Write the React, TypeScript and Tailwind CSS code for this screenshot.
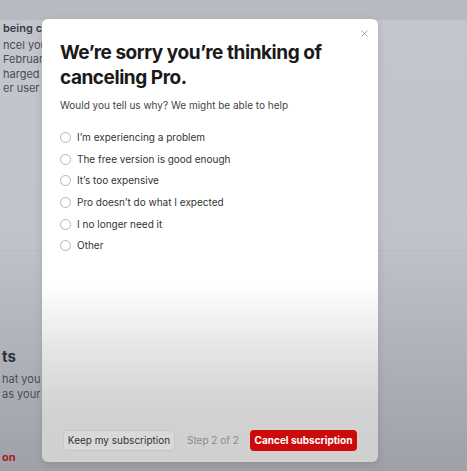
import { X } from 'lucide-react';

const reasons = [
  'I’m experiencing a problem',
  'The free version is good enough',
  'It’s too expensive',
  'Pro doesn’t do what I expected',
  'I no longer need it',
  'Other',
];

function PageBehind() {
  return (
    <div className="flex h-full flex-col bg-gradient-to-b from-[#c4c6cd] via-[#c1c3ca] to-[#9fa1a8] text-[#4a4c52]">
      <div className="h-[20px] bg-[#b8bac1]" />
      <div className="flex flex-col pl-[3px] pt-[1px] text-[11px] leading-[14.5px]">
        <p className="font-semibold text-[#3a3c42]">being ch</p>
        <p className="mt-[2px]">ncel your</p>
        <p>February</p>
        <p>harged $</p>
        <p>er user pe</p>
      </div>
      <div className="mt-[154px] h-px bg-[#b7b9c0]" />
      <div className="mt-[97px] flex flex-col pl-[2px]">
        <p className="text-[15px] font-bold leading-[18px] text-[#2f3136]">ts</p>
        <p className="mt-[6px] text-[11px] leading-[15px]">hat you w</p>
        <p className="text-[11px] leading-[15px]">as your c</p>
        <p className="mt-[48px] text-[11px] font-bold leading-[14px] text-[#a31c1c]">on</p>
      </div>
    </div>
  );
}

export default function App() {
  return (
    <div
      className="relative h-[471px] w-[467px] overflow-hidden"
      style={{ fontFamily: 'Inter, "Noto Sans", sans-serif' }}
    >
      <PageBehind />

      <div className="absolute left-[42px] top-[19px] flex h-[443px] w-[336px] flex-col rounded-[6px] bg-[linear-gradient(to_bottom,#ffffff_0%,#ffffff_60%,#e6e6e6_74%,#d2d2d2_88%,#d0d0d0_100%)] shadow-[0_2px_8px_rgba(0,0,0,0.12)]">
        <button className="absolute right-[8px] top-[8px] flex h-[12px] w-[12px] items-center justify-center text-[#8a8a8a]">
          <X className="h-[11px] w-[11px]" strokeWidth={1.6} />
        </button>

        <div className="flex flex-col px-[18px] pt-[21px]">
          <h1 className="pr-[30px] text-[19px] font-bold leading-[25px] tracking-[-0.45px] text-[#1a1a1a]">
            We’re sorry you’re thinking of canceling Pro.
          </h1>
          <p className="mt-[8px] text-[10px] leading-[14px] text-[#444]">
            Would you tell us why? We might be able to help
          </p>

          <div className="mt-[15px] flex flex-col">
            {reasons.map((r) => (
              <label key={r} className="flex h-[21.6px] items-center gap-[6px]">
                <span className="h-[11px] w-[11px] shrink-0 rounded-full border border-[#b5b5b5] bg-white" />
                <span className="text-[10px] text-[#333]">{r}</span>
              </label>
            ))}
          </div>
        </div>

        <div className="mt-auto flex items-center px-[21px] pb-[11px]">
          <button className="h-[21px] w-[112px] whitespace-nowrap rounded-[4px] border border-[#c6c6c6] bg-[#d9d9d9] text-[10px] text-[#333]">
            Keep my subscription
          </button>
          <span className="ml-[12px] whitespace-nowrap text-[10px] text-[#8a8a8a]">Step 2 of 2</span>
          <button className="ml-auto h-[21px] w-[107px] whitespace-nowrap rounded-[4px] bg-[#cc0a0a] text-[10px] font-bold text-white">
            Cancel subscription
          </button>
        </div>
      </div>
    </div>
  );
}
